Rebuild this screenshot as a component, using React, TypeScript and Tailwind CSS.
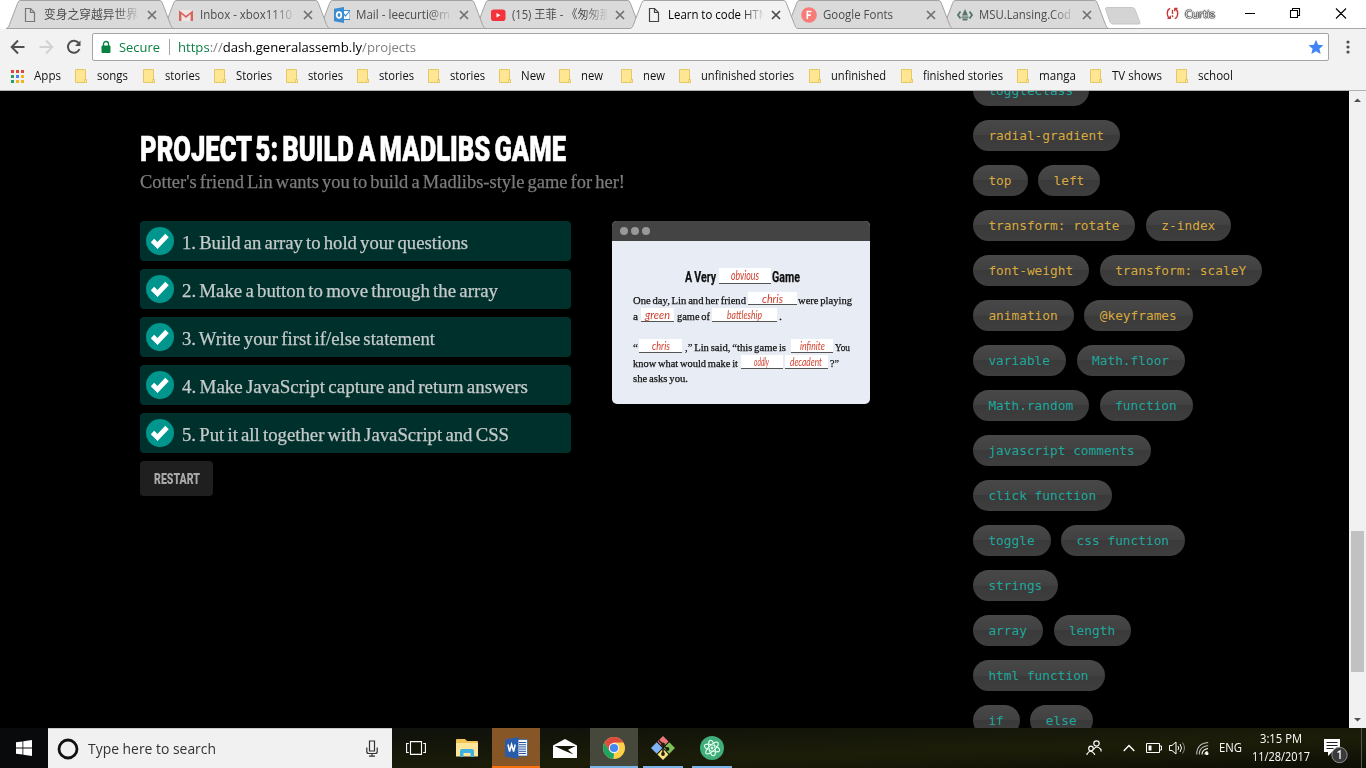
import { useLayoutEffect, useRef, useState } from "react";
import type { ReactNode } from "react";

const UI = "font-['Open_Sans','Noto_Sans_CJK_SC',sans-serif]";
const SERIF = "font-['Liberation_Serif',serif] [word-spacing:-0.08em] [-webkit-text-stroke:0.25px_currentColor]";

/* One line of text, condensed or widened to fill the width its class gives. */
function Fit({ className = "", children }: { className?: string; children: ReactNode }) {
  const outer = useRef<HTMLSpanElement>(null);
  const inner = useRef<HTMLSpanElement>(null);
  const [scale, setScale] = useState(1);
  useLayoutEffect(() => {
    if (outer.current && inner.current) {
      setScale(outer.current.offsetWidth / (inner.current.getBoundingClientRect().width || 1));
    }
  }, []);
  return (
    <span ref={outer} className={`block shrink-0 whitespace-nowrap ${className}`}>
      <span ref={inner} className="inline-block origin-left" style={{ transform: `scaleX(${scale})` }}>
        {children}
      </span>
    </span>
  );
}

const PageIcon = ({ color }: { color: string }) => (
  <svg viewBox="0 0 16 16" className="size-4" fill="none" stroke={color} strokeWidth="1.2">
    <path d="M3.5 1.5h5l4 4v9h-9z" />
    <path d="M8.5 1.5v4h4" />
  </svg>
);

const tabs: { title: string; w: string; icon: ReactNode; active?: boolean }[] = [
  { title: "变身之穿越异世界", w: "w-[94px]", icon: <PageIcon color="#777" /> },
  {
    title: "Inbox - xbox1110",
    w: "w-[92px]",
    icon: (
      <svg viewBox="0 0 16 16" className="size-4">
        <path d="M1 3h14v11H1z" fill="#efe6e5" />
        <path d="M1 14V3.2l7 5.6 7-5.6V14h-2.4V7L8 10.900 3.400 7V14z" fill="#d8655c" />
      </svg>
    ),
  },
  {
    title: "Mail - leecurti@m",
    w: "w-[94px]",
    icon: (
      <svg viewBox="0 0 16 16" className="size-4">
        <path d="M8 3.500h8v9H8z" fill="#fff" stroke="#3b8dd0" />
        <path d="m9 6 2.500 3L15.500 4" fill="none" stroke="#3b8dd0" strokeWidth="1.200" />
        <path d="M0 1.700 10 0v16L0 14.300z" fill="#3b8dd0" />
        <ellipse cx="5" cy="8" rx="2.300" ry="2.900" fill="none" stroke="#fff" strokeWidth="1.700" />
      </svg>
    ),
  },
  {
    title: "(15) 王菲 - 《匆匆那",
    w: "w-[99px]",
    icon: (
      <svg viewBox="0 0 16 16" className="size-4">
        <rect x="1" y="2.500" width="14.500" height="11.500" rx="2.800" fill="#f4333a" />
        <path d="M6.500 6v4.500L10.500 8.200z" fill="#fff" />
      </svg>
    ),
  },
  { title: "Learn to code HTM", w: "w-[101px]", icon: <PageIcon color="#444" />, active: true },
  {
    title: "Google Fonts",
    w: "w-[70px]",
    icon: (
      <svg viewBox="0 0 16 16" className="size-4">
        <circle cx="8" cy="8" r="7.800" fill="#f77b78" />
        <path d="M6.300 12V4.500h4.200M6.300 8.100h3.500" stroke="#fff" strokeWidth="1.600" fill="none" />
      </svg>
    ),
  },
  {
    title: "MSU.Lansing.Cod",
    w: "w-[92px]",
    icon: (
      <svg viewBox="0 0 16 16" className="size-4">
        <path d="M3.500 4.500 1 8l2.500 3.500M12.500 4.500 15 8l-2.500 3.500" stroke="#56756a" strokeWidth="1.800" fill="none" />
        <path d="M8 2l1.200 2.500L11 8.500H5l1.800-4zM4.500 9.500h7v1.200h-7zM5 11.500h6l-1 2H6z" fill="#56756a" />
      </svg>
    ),
  },
];

const stack = ["z-[7]", "z-[6]", "z-[5]", "z-[4]", "z-[9]", "z-[2]", "z-[1]"];

function TabStrip() {
  return (
    <div className="flex h-[29px] bg-white pl-[6px]">
      {tabs.map((t, i) => (
        <div key={t.title} className={`relative h-[29px] w-[155.9px] shrink-0 ${stack[i]}`}>
          <svg viewBox="0 0 168 29" className="absolute top-0 left-0 h-[29px] w-[168px] overflow-visible">
            <path d="M0 28.500 C2 28 2.500 27 3.500 24.500L11.500 3.500C12.500 1 13 .5 15 .5H153C155 .5 155.500 1 156.500 3.500L164.500 24.500C165.500 27 166 28 168 28.500V29H0z" fill={t.active ? "#f2f2f2" : "#dadada"} />
            <path d="M0 28.500 C2 28 2.500 27 3.500 24.500L11.500 3.500C12.500 1 13 .5 15 .5H153C155 .5 155.500 1 156.500 3.500L164.500 24.500C165.500 27 166 28 168 28.500" fill="none" stroke="#a3a3a3" />
            {!t.active && <path d="M0 28.500H168" stroke="#a3a3a3" />}
          </svg>
          <div className="relative flex h-[29px] items-center pl-[16px]">
            <span className="mr-[6px] flex w-4">{t.icon}</span>
            <div className="h-[20px] w-[95px] overflow-hidden [mask-image:linear-gradient(to_right,black_76%,transparent_102%)]">
              <Fit className={`text-[12px] leading-[20px] ${t.active ? "text-black" : "text-[#4c4c4c]"} ${t.w}`}>{t.title}</Fit>
            </div>
            <svg viewBox="0 0 10 10" className="ml-[8px] size-[10px]" stroke={t.active ? "#4a4a4a" : "#707070"} strokeWidth="1.700">
              <path d="M1 1l8 8M9 1 1 9" />
            </svg>
          </div>
        </div>
      ))}
      <div className="flex flex-1 items-start border-b border-[#a9a9a9] pl-[8px]">
        <svg viewBox="0 0 36 18" className="mt-[7px] h-[18px] w-[36px]">
          <path d="M2 .5h25q2 0 3 2l5 13q.5 1.500-1.500 1.500H8q-2 0-3-2L.7 2.500Q.3.500 2 .5z" fill="#d4d4d4" stroke="#c6c6c6" />
        </svg>
        <svg viewBox="0 0 14 14" className="mt-[7px] ml-[25px] size-[13px]" fill="none" stroke="#c53a33" strokeWidth="1.500">
          <path d="M4.500 1.500C.5 3 .5 9.500 3.500 12M1.500 12.300H4.600V9.500M9.500 12.500C13.500 11 13.500 4.500 10.500 2M12.500 1.500H9.500V4.500M7 3v4.500M7 9v2" />
        </svg>
        <Fit className="mt-[5px] ml-[6px] w-[30px] text-[11.500px] leading-[18px] text-white [text-shadow:0_0_1px_#000,0_0_1px_#000,0_0_1px_#000,0_0_1px_#000,0_0_2px_#333]">Curtis</Fit>
        <svg viewBox="0 0 104 16" className="mt-[5px] ml-[29px] h-[16px] w-[104px]" fill="none" stroke="#000" strokeWidth="1.100">
          <path d="M1 8.500h10M46.500 5.500h7v7h-7zM48.500 5.500v-2h7v7h-2M92 3.500l10 10M102 3.500l-10 10" />
        </svg>
      </div>
    </div>
  );
}

function Toolbar() {
  return (
    <div className="flex h-[33px] items-center pt-[3px]">
      <svg viewBox="0 0 92 28" className="h-[28px] w-[92px] shrink-0" fill="none" strokeWidth="2">
        <path d="M24.500 14H12.500M18 7.500 11.700 14l6.300 6.500" stroke="#505050" />
        <path d="M39.500 14h12M46 7.500l6.300 6.500-6.300 6.500" stroke="#d2d2d2" />
        <path d="M78.600 10A6 6 0 1 0 79.500 16" stroke="#505050" />
        <path d="M80.500 7.500v5.500h-5.500z" fill="#505050" stroke="none" />
      </svg>
      <div className="flex h-[28px] w-[1237px] items-center rounded-[2px] border border-[#a5a5a5] bg-white">
        <svg viewBox="0 0 10 14" className="ml-[8px] h-[14px] w-[10px]">
          <path d="M1 6h8v6.500H1z" fill="#0b8043" stroke="#0b8043" />
          <path d="M2.500 6V4a2.500 2.500 0 0 1 5 0v2" fill="none" stroke="#0b8043" strokeWidth="1.300" />
        </svg>
        <Fit className="ml-[8px] w-[41px] text-[13.5px] leading-[20px] text-[#0b8043]">Secure</Fit>
        <span className="mx-[9px] h-[16px] w-px bg-[#a5a5a5]" />
        <Fit className="-ml-px w-[238px] text-[13.5px] leading-[20px] text-black">
          <span className="text-[#0b8043]">https</span>
          <span className="text-[#808080]">://</span>dash.generalassemb.ly<span className="text-[#808080]">/projects</span>
        </Fit>
        <svg viewBox="0 0 24 24" className="mr-[4px] ml-auto size-[16px]">
          <path d="M12 1l3.200 7.500 8 .7-6.100 5.300 1.900 8L12 18.200 5 22.500l1.900-8L.8 9.200l8-.7z" fill="#4285f4" />
        </svg>
      </div>
      <svg viewBox="0 0 4 14" className="ml-[17px] h-[14px] w-[4px]" fill="#505050">
        <circle cx="2" cy="2" r="1.600" /><circle cx="2" cy="7" r="1.600" /><circle cx="2" cy="12" r="1.600" />
      </svg>
    </div>
  );
}

const bookmarks = [
  ["songs", "w-[68px]", "w-[31px]"],
  ["stories", "w-[71px]", "w-[35px]"],
  ["Stories", "w-[72px]", "w-[36px]"],
  ["stories", "w-[71px]", "w-[35px]"],
  ["stories", "w-[71px]", "w-[35px]"],
  ["stories", "w-[71px]", "w-[35px]"],
  ["New", "w-[60px]", "w-[24px]"],
  ["new", "w-[62px]", "w-[22px]"],
  ["new", "w-[58px]", "w-[22px]"],
  ["unfinished stories", "w-[130px]", "w-[93px]"],
  ["unfinished", "w-[92px]", "w-[55px]"],
  ["finished stories", "w-[116px]", "w-[80px]"],
  ["manga", "w-[73px]", "w-[37px]"],
  ["TV shows", "w-[86px]", "w-[50px]"],
  ["school", "w-[70px]", "w-[35px]"],
];

const appColors = ["#e0453a", "#e0453a", "#e0453a", "#2f9e59", "#4381ec", "#f0b41e", "#2f9e59", "#f0b41e", "#f0b41e"];

function Bookmarks() {
  return (
    <div className="flex h-[29px] items-center border-b border-[#b2b2b2] pl-[11px] text-[12px] leading-[18px] text-[#111]">
      <div className="grid grid-cols-[3px_3px_3px] gap-[2px]">
        {appColors.map((c, i) => (
          <span key={i} className="size-[3px]" style={{ backgroundColor: c }} />
        ))}
      </div>
      <Fit className="mr-[14px] ml-[10px] w-[27px]">Apps</Fit>
      {bookmarks.map(([name, cell, w], i) => (
        <div key={i} className={`flex shrink-0 items-center ${cell}`}>
          <svg viewBox="0 0 12 14" className="mr-[10px] h-[14px] w-[12px]">
            <path d="M.5.500h10V10.500h1v3H.5z" fill="#ffe693" stroke="#e5c766" />
            <path d="M9.500 13.500v-3h2v3z" fill="#ffe693" stroke="#e5c766" strokeWidth=".8" />
          </svg>
          <Fit className={w}>{name}</Fit>
        </div>
      ))}
    </div>
  );
}

const steps = [
  ["1. Build an array to hold your questions", "w-[286px]"],
  ["2. Make a button to move through the array", "w-[316px]"],
  ["3. Write your first if/else statement", "w-[253px]"],
  ["4. Make JavaScript capture and return answers", "w-[346px]"],
  ["5. Put it all together with JavaScript and CSS", "w-[327px]"],
];

function Blank({ box, text, children }: { box: string; text: string; children: string }) {
  return (
    <span className={`flex h-[14px] shrink-0 justify-center border-b border-[#555] bg-white font-['Lato',sans-serif] text-[11px] leading-[13px] text-[#cf3f2c] italic [-webkit-text-stroke:0] ${box}`}>
      <Fit className={text}>{children}</Fit>
    </span>
  );
}

function Preview() {
  return (
    <div className="h-[183px] w-[258px] overflow-hidden rounded-[5px] bg-[#e8ecf4]">
      <div className="flex h-[20px] items-center gap-[3px] bg-[#444] pl-[8px]">
        <span className="size-[8px] rounded-full bg-[#999]" />
        <span className="size-[8px] rounded-full bg-[#999]" />
        <span className="size-[8px] rounded-full bg-[#999]" />
      </div>
      <div className={`pt-[27px] pl-[21px] text-[10.500px] text-[#111] ${SERIF}`}>
        <div className="flex h-[18px] items-start pl-[52px] font-['Roboto',sans-serif] text-[15px] leading-[19px] font-bold">
          <Fit className="w-[31px]">A Very</Fit>
          <Blank box="ml-[2.500px] w-[52px] !h-[16px] !text-[13px] !leading-[14px] font-normal" text="w-[28px]">obvious</Blank>
          <Fit className="ml-[1.500px] w-[28px]">Game</Fit>
        </div>
        <div className="mt-[6px] flex h-[15.700px] items-start leading-[17px]">
          <Fit className="w-[113px]">One day, Lin and her friend</Fit>
          <Blank box="ml-[2px] w-[49px] !h-[13px]" text="w-[21px]">chris</Blank>
          <Fit className="ml-[.500px] w-[53.500px]">were playing</Fit>
        </div>
        <div className="flex h-[15.700px] items-start leading-[17px]">
          <Fit className="w-[4.500px]">a</Fit>
          <Blank box="ml-[3.500px] w-[33px]" text="w-[25px]">green</Blank>
          <Fit className="ml-[2.500px] w-[33px]">game of</Fit>
          <Blank box="ml-[2.500px] w-[65px]" text="w-[35px]">battleship</Blank>
          <Fit className="ml-[1.500px] w-[3px]">.</Fit>
        </div>
        <div className="mt-[15.600px] flex h-[15.700px] items-start leading-[17px]">
          <Fit className="w-[4.500px]">“</Fit>
          <Blank box="ml-[1.500px] w-[43px]" text="w-[18px]">chris</Blank>
          <Fit className="ml-[2.500px] w-[101px]">,” Lin said, “this game is</Fit>
          <Blank box="ml-[5.500px] w-[42px]" text="w-[25px]">infinite</Blank>
          <Fit className="ml-[2px] w-[15px]">You</Fit>
        </div>
        <div className="flex h-[15.700px] items-start leading-[17px]">
          <Fit className="w-[104.500px]">know what would make it</Fit>
          <Blank box="ml-[3px] w-[42px]" text="w-[15px]">oddly</Blank>
          <Blank box="ml-[2px] w-[43.500px]" text="w-[32px]">decadent</Blank>
          <Fit className="ml-[2px] w-[9px]">?”</Fit>
        </div>
        <Fit className="w-[54.500px] leading-[17px]">she asks you.</Fit>
      </div>
    </div>
  );
}

const Y = "text-[#d9aa3f]";
const T = "text-[#1fa79c]";
const tagRows: [string, string[]][] = [
  [T, ["toggleClass"]],
  [Y, ["radial-gradient"]],
  [Y, ["top", "left"]],
  [Y, ["transform: rotate", "z-index"]],
  [Y, ["font-weight", "transform: scaleY"]],
  [Y, ["animation", "@keyframes"]],
  [T, ["variable", "Math.floor"]],
  [T, ["Math.random", "function"]],
  [T, ["javascript comments"]],
  [T, ["click function"]],
  [T, ["toggle", "css function"]],
  [T, ["strings"]],
  [T, ["array", "length"]],
  [T, ["html function"]],
  [T, ["if", "else"]],
];

function PageBody() {
  return (
    <div className="flex h-[637px] overflow-hidden bg-black">
      <main className="w-[973px] shrink-0 pt-[38px] pl-[140px]">
        <h1 className="font-['Roboto',sans-serif] text-[34.500px] leading-[40px] font-black text-white [word-spacing:-3px] [-webkit-text-stroke:0.6px_white]">
          <Fit className="w-[426px]">PROJECT 5: BUILD A MADLIBS GAME</Fit>
        </h1>
        <p className={`pt-[1px] text-[18px] leading-[24px] text-[#7c7c7c] ${SERIF}`}>
          <Fit className="w-[485px]">Cotter's friend Lin wants you to build a Madlibs-style game for her!</Fit>
        </p>
        <div className="mt-[27px] flex gap-[41px]">
          <div className="flex w-[431px] flex-col items-start gap-[8px]">
            {steps.map(([s, w]) => (
              <div key={s} className={`flex h-[40px] w-full items-center rounded-[4px] bg-[#00302c] pl-[6px] text-[18px] leading-[24px] text-[#c5cbca] ${SERIF}`}>
                <svg viewBox="0 0 28 28" className="mr-[8px] size-[28px]">
                  <circle cx="14" cy="14" r="14" fill="#00958d" />
                  <path d="M6.500 13.500l5 5L21 8.500" fill="none" stroke="#fff" strokeWidth="4.800" />
                </svg>
                <Fit className={`pt-[3px] ${w}`}>{s}</Fit>
              </div>
            ))}
            <button className="flex h-[35px] w-[73px] items-center justify-center rounded-[4px] bg-[#1f1f1f] font-['Roboto',sans-serif] text-[15px] leading-[20px] font-black text-[#a9a9a9]">
              <Fit className="w-[46px] text-left">RESTART</Fit>
            </button>
          </div>
          <Preview />
        </div>
      </main>
      <aside className="-mt-[16px] flex flex-1 flex-col gap-[14px]">
        {tagRows.map(([color, names]) => (
          <div key={names[0]} className="flex gap-[10.500px]">
            {names.map((n) => (
              <span key={n} className={`h-[31px] rounded-full bg-[linear-gradient(#484848,#414141_50%,#3a3a3a_50%,#3e3e3e)] pr-[16.100px] pl-[15.400px] font-['DejaVu_Sans_Mono',monospace] text-[12.800px] leading-[32px] whitespace-pre ${color}`}>
                {n}
              </span>
            ))}
          </div>
        ))}
      </aside>
      <div className="flex w-[17px] flex-col items-center bg-[#f1f1f1]">
        <svg viewBox="0 0 17 17" className="size-[17px]"><path d="M5 11h7L8.500 7.500z" fill="#505050" /></svg>
        <span className="mt-[423px] h-[141px] w-[13px] bg-[#c1c1c1]" />
        <svg viewBox="0 0 17 17" className="mt-auto size-[17px]"><path d="M5 7h7l-3.500 3.500z" fill="#505050" /></svg>
      </div>
    </div>
  );
}

function Slot({ className = "", bar = "", children }: { className?: string; bar?: string; children: ReactNode }) {
  return (
    <div className={`flex h-[40px] w-[48px] shrink-0 flex-col items-center ${className}`}>
      <div className="flex h-[38px] items-center pt-[2px]">{children}</div>
      <span className={`h-[2px] ${bar}`} />
    </div>
  );
}

function Taskbar() {
  return (
    <div className="flex h-[40px] bg-[linear-gradient(178deg,#0b0f12_0%,#12140a_30%,#1c1d08_65%,#0d0e05_100%)] text-white">
      <Slot className="bg-[#080a0b]">
        <svg viewBox="0 0 16 16" className="size-[16px]" fill="#fff">
          <path d="M0 2.300l6.500-.9v6.200H0zM7.300 1.300 16 0v7.600H7.300zM0 8.400h6.500v6.200L0 13.700zM7.300 8.400H16V16l-8.700-1.200z" />
        </svg>
      </Slot>
      <div className="flex w-[344px] shrink-0 items-center border-t border-[#c9c9c9] bg-[#f1f1f1] pl-[9px]">
        <svg viewBox="0 0 22 22" className="size-[22px]"><circle cx="11" cy="11" r="9" fill="none" stroke="#111" strokeWidth="2.800" /></svg>
        <Fit className="ml-[9px] w-[128px] text-[14.500px] leading-[22px] text-[#333]">Type here to search</Fit>
        <svg viewBox="0 0 12 17" className="mr-[14px] ml-auto h-[17px] w-[12px]" fill="none" stroke="#333" strokeWidth="1.200">
          <path d="M3.500 1h5v10h-5zM.8 7.500v4q0 2 2 2h6.400q2 0 2-2v-4M6 13.500V16M3 16.200h6" />
        </svg>
      </div>
      <Slot className="mr-[3px]">
        <svg viewBox="0 0 20 14" className="h-[14px] w-[20px]" fill="none" stroke="#fff" strokeWidth="1.100">
          <path d="M4.500 .6h11v12.800h-11zM2.800 2.500H.6v9h2.200M17.200 2.500h2.200v9h-2.200" />
        </svg>
      </Slot>
      <div className="flex gap-px">
        <Slot>
          <svg viewBox="0 0 22 18" className="h-[18px] w-[22px]">
            <path d="M0 1q0-1 1-1h8l2 2h10q1 0 1 1v14H0z" fill="#f0c455" />
            <path d="M0 4h22v13.500H0z" fill="#fde69a" />
            <path d="M4 18v-6q0-2 2-2h10q2 0 2 2v6h-3.500v-4h-7v4z" fill="#3fb1e0" />
          </svg>
        </Slot>
        <Slot className="bg-[#875626]" bar="w-full bg-[#f7700b]">
          <svg viewBox="0 0 23 22" className="h-[22px] w-[23px]">
            <path d="M11 2.500h11.500v16.500H11z" fill="#f7f9fc" stroke="#2b579a" strokeWidth=".7" />
            <path d="M14 5.500h7M14 7.700h7M14 9.900h7M14 12.100h7M14 14.300h7M14 16.500h7" stroke="#2b579a" strokeWidth="1" />
            <path d="M0 2.500 13.500 0v22L0 19.500z" fill="#2b5caa" />
            <path d="M3 7.500l1.600 7 2-7 2 7 1.600-7" fill="none" stroke="#fff" strokeWidth="1.500" />
          </svg>
        </Slot>
        <Slot>
          <svg viewBox="0 0 24 19" className="h-[19px] w-[24px]">
            <path d="M0 6.500 12 0l12 6.500V19H0z" fill="#fff" />
            <path d="M1.500 7H22.500L15 10.800 20.500 15.500 11 11.500z" fill="#161708" />
          </svg>
        </Slot>
        <Slot className="bg-[#45483b]" bar="w-full bg-[#79b5e8]">
          <svg viewBox="0 0 22 22" className="size-[22px]">
            <circle cx="11" cy="11" r="11" fill="#fdd047" />
            <path d="M1.500 5.500 6.300 13.700 11 16 10.500 22A11 11 0 0 1 1.500 5.500z" fill="#1da362" />
            <path d="M1.500 5.500A11 11 0 0 1 20.500 5.500H11L6.300 13.700z" fill="#dd4b3e" />
            <circle cx="11" cy="11" r="5.200" fill="#f1f1f1" />
            <circle cx="11" cy="11" r="4.100" fill="#4688f1" />
          </svg>
        </Slot>
        <Slot bar="w-[40px] bg-[#79b5e8]">
          <svg viewBox="0 0 24 24" className="size-[24px]">
            <path d="M12 0l5.500 5.500L12 11 6.500 5.500z" fill="#f0747c" />
            <path d="M5.700 6.300 11.400 12l-5.700 5.700L0 12z" fill="#80b3f5" />
            <path d="M18.300 6.300 24 12l-5.700 5.700L12.600 12z" fill="#7fc158" />
            <path d="M12 12.800l5.500 5.600L12 24l-5.500-5.600z" fill="#fbe07f" />
            <path d="M8 4.500l4 4v10M12 9l4.500 4.500" stroke="#231c14" strokeWidth="1.500" fill="none" />
            <circle cx="12" cy="8.500" r="1.900" fill="#231c14" /><circle cx="16.500" cy="13" r="1.900" fill="#231c14" /><circle cx="12" cy="18" r="1.900" fill="#231c14" />
          </svg>
        </Slot>
        <Slot bar="w-[40px] bg-[#79b5e8]">
          <svg viewBox="0 0 24 24" className="size-[24px]" fill="none" stroke="#e5fff0" strokeWidth="1">
            <circle cx="12" cy="12" r="12" fill="#3fae7a" stroke="none" />
            <ellipse cx="12" cy="12" rx="3" ry="8" transform="rotate(-12 12 12)" />
            <ellipse cx="12" cy="12" rx="3" ry="8" transform="rotate(48 12 12)" />
            <ellipse cx="12" cy="12" rx="3" ry="8" transform="rotate(108 12 12)" />
            <circle cx="12" cy="12" r="1" fill="#e5fff0" />
          </svg>
        </Slot>
      </div>
      <div className="ml-auto flex h-[40px] shrink-0 items-center">
        <svg viewBox="0 0 16 16" className="size-[16px]" fill="none" stroke="#fff" strokeWidth="1.200">
          <circle cx="10.500" cy="3.500" r="2.700" /><path d="M7.500 9.500q3-5 7.500 0v2" />
          <circle cx="5" cy="8.500" r="2.300" /><path d="M1 15v-1q3.500-5.500 7.500 0v1" />
        </svg>
        <svg viewBox="0 0 12 8" className="ml-[21px] h-[8px] w-[12px]" fill="none" stroke="#fff" strokeWidth="1.400"><path d="M.7 7 6 1.500 11.300 7" /></svg>
        <svg viewBox="0 0 16 10" className="ml-[11px] h-[10px] w-[16px]" fill="none" stroke="#fff"><path d="M.5.500h13v9H.5zM14 3h1.500v4H14" /><path d="M2.500 2.500h3v5h-3z" fill="#fff" stroke="none" /></svg>
        <svg viewBox="0 0 17 14" className="ml-[7px] h-[14px] w-[17px]" fill="none" stroke="#fff">
          <path d="M.5 4.500h2.500l4-3.500v12l-4-3.500H.5zM9 5q1.500 2 0 4" /><path d="M11 3q3 4 0 8" /><path d="M13.500 1.500q4 5.500 0 11" stroke="#888" />
        </svg>
        <svg viewBox="0 0 13 13" className="ml-[10px] size-[13px]" fill="none" stroke="#fff" strokeWidth="1.100">
          <path d="M9 12.500q0-2.500 2.500-3M6 12.500q0-5 6-6" /><path d="M3.200 12.500q0-8 9-9M.7 12.500q0-11 11.500-12" stroke="#bbb" /><circle cx="11" cy="11.500" r="1" fill="#fff" />
        </svg>
        <Fit className="ml-[10px] w-[23px] text-[12px] leading-[18px]">ENG</Fit>
        <div className="ml-[10px] flex w-[58px] flex-col items-center text-[12px] leading-[18px]">
          <Fit className="w-[42px]">3:15 PM</Fit>
          <Fit className="w-[58px]">11/28/2017</Fit>
        </div>
        <svg viewBox="0 0 24 26" className="mt-[5px] ml-[14px] h-[26px] w-[24px]">
          <path d="M0 1h16v13H8l-4 4v-4H0z" fill="#fff" />
          <path d="M2.500 4.500h11M2.500 7.500h11M2.500 10.500h7" stroke="#222" />
          <circle cx="15.500" cy="17" r="7.700" fill="#3a3a3a" stroke="#8b8b8b" />
          <path d="M13.500 14.500l2.500-1.500v8" fill="none" stroke="#fff" strokeWidth="1.300" />
        </svg>
        <span className="ml-[13px] h-[40px] w-px bg-[#555]" />
        <span className="w-[4px]" />
      </div>
    </div>
  );
}

export default function App() {
  return (
    <div className={`h-[768px] w-[1366px] overflow-hidden ${UI}`}>
      <header className="h-[91px] bg-[#f2f2f2]">
        <TabStrip />
        <Toolbar />
        <Bookmarks />
      </header>
      <PageBody />
      <Taskbar />
    </div>
  );
}
